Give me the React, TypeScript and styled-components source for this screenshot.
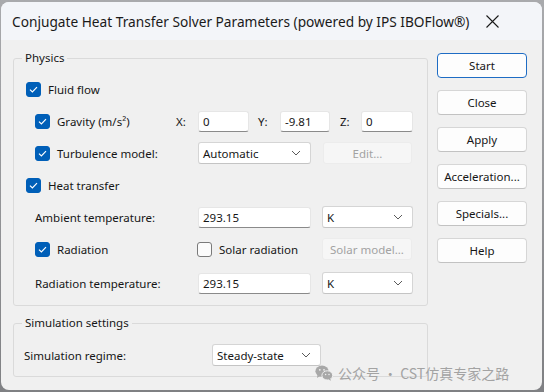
import React from "react";
import styled, { createGlobalStyle } from "styled-components";

const Global = createGlobalStyle`
  html, body { margin: 0; padding: 0; background: #8f9093; }
  body { font-family: "Noto Sans", "Open Sans", sans-serif; }
  * { box-sizing: border-box; }
`;

const Screen = styled.div`
  width: 544px;
  height: 392px;
  padding: 2px 2px 2px 1px;
  background: linear-gradient(#a9aaad, #7f8083);
`;

const Window = styled.div`
  position: relative;
  width: 541px;
  height: 388px;
  border-radius: 8px;
  overflow: hidden;
  background: #f0f0f0;
  display: flex;
  flex-direction: column;
  font-size: 11.5px;
  color: #161616;
`;

const TitleBar = styled.div`
  height: 38px;
  flex: none;
  display: flex;
  align-items: center;
  justify-content: space-between;
  padding-left: 11px;
  background: #f3f5f9;
`;

const Title = styled.div`
  font-size: 13.7px;
  color: #1a1a1a;
  white-space: nowrap;
`;

const CloseBox = styled.div`
  width: 32px;
  height: 38px;
  flex: none;
  margin-right: 34px;
  display: flex;
  align-items: center;
  justify-content: center;
`;

const Content = styled.div`
  display: flex;
  padding-left: 12px;
  gap: 9px;
`;

const LeftCol = styled.div`
  width: 415px;
  display: flex;
  flex-direction: column;
`;

const Group = styled.fieldset<{ $mt: number; $pt: number; $pb: number }>`
  margin: ${(p) => p.$mt}px 0 0 0;
  padding: ${(p) => p.$pt}px 0 ${(p) => p.$pb}px 0;
  border: 1px solid #dadada;
  border-radius: 3px;
  min-width: 0;
`;

const Legend = styled.legend`
  margin-left: 8px;
  padding: 0 3px;
  line-height: 16px;
  font-size: 11.5px;
  color: #161616;
`;

const Row = styled.div<{ $pl: number; $mt?: number }>`
  display: flex;
  align-items: center;
  height: 32px;
  padding-left: ${(p) => p.$pl}px;
  margin-top: ${(p) => p.$mt ?? 0}px;
`;

const Cell = styled.div<{ $w: number }>`
  width: ${(p) => p.$w}px;
  flex: none;
  display: flex;
  align-items: center;
  white-space: nowrap;
`;

const Box = styled.span<{ $on: boolean }>`
  width: 15px;
  height: 15px;
  flex: none;
  border-radius: 3px;
  margin-right: 7px;
  display: inline-flex;
  align-items: center;
  justify-content: center;
  background: ${(p) => (p.$on ? "#005fb8" : "#fbfbfb")};
  border: 1px solid ${(p) => (p.$on ? "#005fb8" : "#7a7a7a")};
`;

const AxisLabel = styled.span<{ $w: number; $ml?: number }>`
  width: ${(p) => p.$w}px;
  margin-left: ${(p) => p.$ml ?? 0}px;
  flex: none;
`;

const TextInput = styled.div<{ $w: number }>`
  width: ${(p) => p.$w}px;
  height: 21px;
  flex: none;
  background: #fff;
  border: 1px solid #e6e6e6;
  border-bottom: 1px solid #8a8a8a;
  border-radius: 3px;
  padding-left: 4px;
  display: flex;
  align-items: center;
`;

const Select = styled.div<{ $w: number; $ml?: number }>`
  width: ${(p) => p.$w}px;
  height: 22px;
  margin-left: ${(p) => p.$ml ?? 0}px;
  flex: none;
  background: #fff;
  border: 1px solid #d5d5d5;
  border-bottom-color: #c4c4c4;
  border-radius: 3px;
  padding: 0 9px 0 4px;
  display: flex;
  align-items: center;
  justify-content: space-between;
`;

const GhostButton = styled.div<{ $w: number; $ml?: number }>`
  width: ${(p) => p.$w}px;
  height: 22px;
  margin-left: ${(p) => p.$ml ?? 0}px;
  flex: none;
  border-radius: 3px;
  background: #f6f6f6;
  border: 1px solid #ececec;
  color: #a2a2a2;
  display: flex;
  align-items: center;
  justify-content: center;
`;

const ButtonCol = styled.div`
  width: 90px;
  padding-top: 13px;
  display: flex;
  flex-direction: column;
  gap: 12px;
`;

const Button = styled.div<{ $primary?: boolean }>`
  height: 25px;
  border-radius: 4px;
  background: #fdfdfd;
  border: 1px solid ${(p) => (p.$primary ? "#1e6cc4" : "#d6d6d6")};
  border-bottom-color: ${(p) => (p.$primary ? "#1e6cc4" : "#c2c2c2")};
  display: flex;
  align-items: center;
  justify-content: center;
  color: #161616;
`;

const Watermark = styled.div`
  position: absolute;
  left: 314px;
  top: 361px;
  display: flex;
  align-items: center;
  gap: 5px;
  font-family: "Noto Sans CJK SC", "Noto Sans", sans-serif;
  font-size: 14px;
  color: #a3a3a3;
`;

const Check = () => (
  <svg width="9" height="7" viewBox="0 0 9 7">
    <path d="M1 3.6 L3.4 6 L8 1.2" fill="none" stroke="#fff" strokeWidth="1.2" />
  </svg>
);

const CheckBox = ({ on, children }: { on: boolean; children: React.ReactNode }) => (
  <>
    <Box $on={on}>{on && <Check />}</Box>
    <span>{children}</span>
  </>
);

const Chevron = () => (
  <svg width="10" height="6" viewBox="0 0 10 6">
    <path d="M1 1 L5 5 L9 1" fill="none" stroke="#5a5a5a" strokeWidth="1" />
  </svg>
);

const Drop = ({ w, ml, value }: { w: number; ml?: number; value: string }) => (
  <Select $w={w} $ml={ml}>
    <span>{value}</span>
    <Chevron />
  </Select>
);

const WeChat = () => (
  <svg width="18" height="16" viewBox="0 0 18 16">
    <ellipse cx="7" cy="6.2" rx="6.6" ry="5.6" fill="#a8a8a8" />
    <path d="M2.5 10 L2 13 L5 11 Z" fill="#a8a8a8" />
    <ellipse cx="12.3" cy="10.4" rx="5.4" ry="4.6" fill="#a8a8a8" stroke="#f0f0f0" strokeWidth="1" />
    <path d="M15.2 13.8 L16 15.8 L13.4 14.6 Z" fill="#a8a8a8" />
    <circle cx="4.8" cy="4.8" r="0.9" fill="#f0f0f0" />
    <circle cx="9" cy="4.8" r="0.9" fill="#f0f0f0" />
    <circle cx="10.6" cy="9.6" r="0.75" fill="#f0f0f0" />
    <circle cx="14" cy="9.6" r="0.75" fill="#f0f0f0" />
  </svg>
);

export default function App() {
  return (
    <Screen>
      <Global />
      <Window>
        <TitleBar>
          <Title>Conjugate Heat Transfer Solver Parameters (powered by IPS IBOFlow®)</Title>
          <CloseBox>
            <svg width="13" height="13" viewBox="0 0 13 13">
              <path d="M0.5 0.5 L12.5 12.5 M12.5 0.5 L0.5 12.5" stroke="#1a1a1a" strokeWidth="1.1" />
            </svg>
          </CloseBox>
        </TitleBar>
        <Content>
          <LeftCol>
            <Group $mt={10} $pt={7} $pb={6}>
              <Legend>Physics</Legend>
              <Row $pl={12}>
                <CheckBox on>Fluid flow</CheckBox>
              </Row>
              <Row $pl={21}>
                <Cell $w={141}>
                  <CheckBox on>Gravity (m/s²)</CheckBox>
                </Cell>
                <AxisLabel $w={22}>X:</AxisLabel>
                <TextInput $w={51}>0</TextInput>
                <AxisLabel $w={22} $ml={9}>Y:</AxisLabel>
                <TextInput $w={50}>-9.81</TextInput>
                <AxisLabel $w={21} $ml={10}>Z:</AxisLabel>
                <TextInput $w={52}>0</TextInput>
              </Row>
              <Row $pl={21}>
                <Cell $w={163}>
                  <CheckBox on>Turbulence model:</CheckBox>
                </Cell>
                <Drop w={113} value="Automatic" />
                <GhostButton $w={89} $ml={12}>Edit...</GhostButton>
              </Row>
              <Row $pl={12}>
                <CheckBox on>Heat transfer</CheckBox>
              </Row>
              <Row $pl={21}>
                <Cell $w={163}>Ambient temperature:</Cell>
                <TextInput $w={113}>293.15</TextInput>
                <Drop w={91} ml={11} value="K" />
              </Row>
              <Row $pl={21}>
                <Cell $w={162}>
                  <CheckBox on>Radiation</CheckBox>
                </Cell>
                <Cell $w={125}>
                  <CheckBox on={false}>Solar radiation</CheckBox>
                </Cell>
                <GhostButton $w={90}>Solar model...</GhostButton>
              </Row>
              <Row $pl={21} $mt={2}>
                <Cell $w={163}>Radiation temperature:</Cell>
                <TextInput $w={113}>293.15</TextInput>
                <Drop w={91} ml={11} value="K" />
              </Row>
            </Group>
            <Group $mt={9} $pt={8} $pb={5}>
              <Legend>Simulation settings</Legend>
              <Row $pl={10}>
                <Cell $w={188}>Simulation regime:</Cell>
                <Drop w={109} value="Steady-state" />
              </Row>
            </Group>
          </LeftCol>
          <ButtonCol>
            <Button $primary>Start</Button>
            <Button>Close</Button>
            <Button>Apply</Button>
            <Button>Acceleration...</Button>
            <Button>Specials...</Button>
            <Button>Help</Button>
          </ButtonCol>
        </Content>
        <Watermark>
          <WeChat />
          <span>公众号 · CST仿真专家之路</span>
        </Watermark>
      </Window>
    </Screen>
  );
}
